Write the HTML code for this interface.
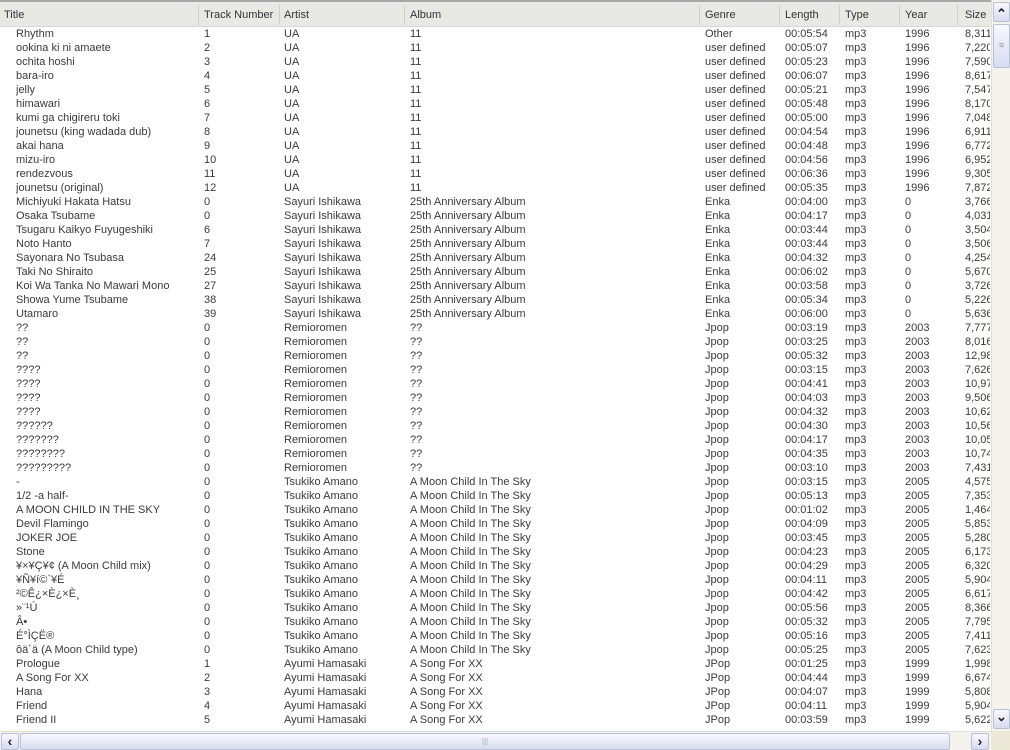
<!DOCTYPE html>
<html><head><meta charset="utf-8"><style>
*{margin:0;padding:0;box-sizing:border-box}
body{width:1010px;height:750px;overflow:hidden;background:#fff;font-family:"Liberation Sans","Noto Sans CJK JP",sans-serif;font-size:11px;color:#3a3a3a;position:relative}
.hdr{position:absolute;left:0;top:0;width:991px;height:27px;background:#e8e8e4;border-top:2px solid #a8a8a8;border-bottom:1px solid #d8d8d0}
.hdr span{position:absolute;top:7px;white-space:nowrap;color:#333}
.hdr i{position:absolute;top:3px;width:1px;height:20px;background:#fff;border-left:1px solid #d0d0c8}
.row{position:absolute;left:0;width:991px;height:14px;white-space:nowrap}
.row span{position:absolute;top:0;line-height:14px;overflow:hidden}
.vs{position:absolute;left:991px;top:0;width:19px;height:731px;background:#f4f3ee;border-left:1px solid #e0e0d8}
.btn{position:absolute;background:linear-gradient(#f8f8ff,#d8dcf0);border:1px solid #b8c0d8;border-radius:2px;font-weight:bold}
.hs{position:absolute;left:0;top:731px;width:991px;height:19px;background:#f4f3ee;border-top:1px solid #e0e0d8}
.corner{position:absolute;left:991px;top:731px;width:19px;height:19px;background:#ece9d8}
</style></head><body>
<div class="hdr">
<span style="left:4px">Title</span><i style="left:198px"></i>
<span style="left:204px">Track Number</span><i style="left:279px"></i>
<span style="left:284px">Artist</span><i style="left:404px"></i>
<span style="left:410px">Album</span><i style="left:699px"></i>
<span style="left:705px">Genre</span><i style="left:779px"></i>
<span style="left:785px">Length</span><i style="left:839px"></i>
<span style="left:845px">Type</span><i style="left:899px"></i>
<span style="left:905px">Year</span><i style="left:957px"></i>
<span style="left:965px">Size</span>
</div>
<div id="rows"></div>
<div class="vs">
<div class="btn" style="left:1px;top:2px;width:17px;height:20px;text-align:center;font-size:13px;line-height:22px;color:#222">&#8963;</div>
<div class="btn" style="left:1px;top:24px;width:17px;height:44px;text-align:center;line-height:40px;color:#999;font-size:9px;font-weight:normal">≡</div>
<div class="btn" style="left:1px;top:709px;width:17px;height:20px;text-align:center;font-size:13px;line-height:14px;color:#222">&#8964;</div>
</div>
<div class="hs">
<div class="btn" style="left:1px;top:1px;width:18px;height:17px;text-align:center;line-height:15px;font-size:14px;color:#222">‹</div>
<div class="btn" style="left:20px;top:1px;width:930px;height:17px;text-align:center;line-height:15px;color:#aaa;font-size:8px;font-weight:normal">|||</div>
<div class="btn" style="left:971px;top:1px;width:18px;height:17px;text-align:center;line-height:15px;font-size:14px;color:#222">›</div>
</div>
<div class="corner"></div>
<script>
var d=[
["Rhythm",1,"UA","11","Other","00:05:54","mp3","1996","8,311"],
["ookina ki ni amaete",2,"UA","11","user defined","00:05:07","mp3","1996","7,220"],
["ochita hoshi",3,"UA","11","user defined","00:05:23","mp3","1996","7,590"],
["bara-iro",4,"UA","11","user defined","00:06:07","mp3","1996","8,617"],
["jelly",5,"UA","11","user defined","00:05:21","mp3","1996","7,547"],
["himawari",6,"UA","11","user defined","00:05:48","mp3","1996","8,170"],
["kumi ga chigireru toki",7,"UA","11","user defined","00:05:00","mp3","1996","7,048"],
["jounetsu (king wadada dub)",8,"UA","11","user defined","00:04:54","mp3","1996","6,911"],
["akai hana",9,"UA","11","user defined","00:04:48","mp3","1996","6,772"],
["mizu-iro",10,"UA","11","user defined","00:04:56","mp3","1996","6,952"],
["rendezvous",11,"UA","11","user defined","00:06:36","mp3","1996","9,305"],
["jounetsu (original)",12,"UA","11","user defined","00:05:35","mp3","1996","7,872"]];
var S="Sayuri Ishikawa",A25="25th Anniversary Album";
[["Michiyuki Hakata Hatsu",0,"00:04:00","3,766"],["Osaka Tsubame",0,"00:04:17","4,031"],["Tsugaru Kaikyo Fuyugeshiki",6,"00:03:44","3,504"],["Noto Hanto",7,"00:03:44","3,506"],["Sayonara No Tsubasa",24,"00:04:32","4,254"],["Taki No Shiraito",25,"00:06:02","5,670"],["Koi Wa Tanka No Mawari Mono",27,"00:03:58","3,726"],["Showa Yume Tsubame",38,"00:05:34","5,226"],["Utamaro",39,"00:06:00","5,636"]].forEach(function(r){d.push([r[0],r[1],S,A25,"Enka",r[2],"mp3","0",r[3]])});
[["??","00:03:19","7,777"],["??","00:03:25","8,016"],["??","00:05:32","12,98"],["????","00:03:15","7,626"],["????","00:04:41","10,97"],["????","00:04:03","9,506"],["????","00:04:32","10,62"],["??????","00:04:30","10,56"],["???????","00:04:17","10,05"],["????????","00:04:35","10,74"],["?????????","00:03:10","7,431"]].forEach(function(r){d.push([r[0],0,"Remioromen","??","Jpop",r[1],"mp3","2003",r[2]])});
[["-","00:03:15","4,575"],["1/2 -a half-","00:05:13","7,353"],["A MOON CHILD IN THE SKY","00:01:02","1,464"],["Devil Flamingo","00:04:09","5,853"],["JOKER JOE","00:03:45","5,280"],["Stone","00:04:23","6,173"],["¥×¥Ç¥¢ (A Moon Child mix)","00:04:29","6,320"],["¥Ñ¥í©`¥É","00:04:11","5,904"],["²©Ê¿×È¿×È¸","00:04:42","6,617"],["»¨¹Ú","00:05:56","8,366"],["Â•","00:05:32","7,795"],["É°ÌÇË®","00:05:16","7,411"],["ôä´ä (A Moon Child type)","00:05:25","7,623"]].forEach(function(r){d.push([r[0],0,"Tsukiko Amano","A Moon Child In The Sky","Jpop",r[1],"mp3","2005",r[2]])});
[["Prologue",1,"00:01:25","1,998"],["A Song For XX",2,"00:04:44","6,674"],["Hana",3,"00:04:07","5,808"],["Friend",4,"00:04:11","5,904"],["Friend II",5,"00:03:59","5,622"]].forEach(function(r){d.push([r[0],r[1],"Ayumi Hamasaki","A Song For XX","JPop",r[2],"mp3","1999",r[3]])});
var L=[16,204,284,410,705,785,845,905,965],W=[180,70,115,285,70,55,55,50,25],h="";
d.forEach(function(r,i){h+='<div class="row" style="top:'+(27+i*14)+'px">';for(var j=0;j<9;j++){h+='<span style="left:'+L[j]+'px;width:'+W[j]+'px">'+String(r[j]).replace(/</g,"&lt;")+'</span>'}h+='</div>'});
document.getElementById("rows").innerHTML=h;
</script>
</body></html>
